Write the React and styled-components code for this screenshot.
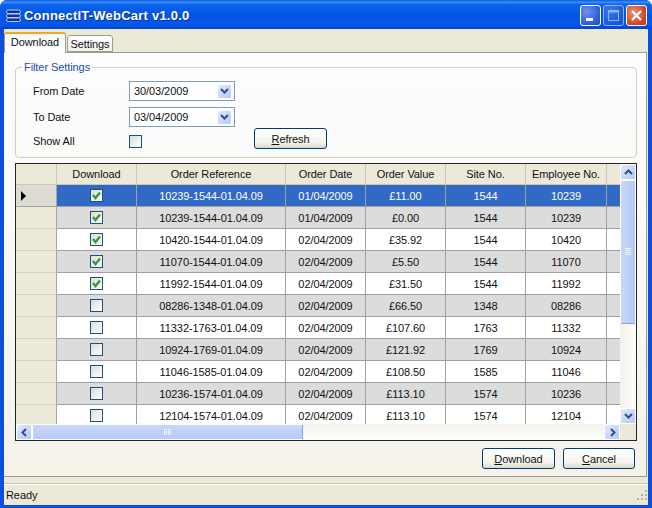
import React from 'react';
import styled, { createGlobalStyle } from 'styled-components';

const GlobalStyle = createGlobalStyle`
	html, body { margin: 0; padding: 0; }
	body { font-family: "Liberation Sans", Arial, sans-serif; font-size: 11px; letter-spacing: -0.08px; color: #111; }
	* { box-sizing: border-box; }
`;

const Window = styled.div`
	width: 652px;
	height: 508px;
	display: flex;
	flex-direction: column;
	background: #0a50dc;
	border-radius: 7px 7px 0 0;
	overflow: hidden;
`;
const TitleBar = styled.div`
	height: 29px;
	flex: none;
	display: flex;
	align-items: center;
	padding: 2px 5px 0 6px;
	background: linear-gradient(180deg, #0a56e0 0%, #3c8ef8 7%, #0a62ec 16%, #0355e3 55%, #0558ec 85%, #0346c8 100%);
`;
const TitleText = styled.div`
	flex: 1;
	margin-left: 3px;
	font-family: "Liberation Sans", sans-serif;
	font-weight: bold;
	font-size: 13px;
	letter-spacing: 0.22px;
	color: #fff;
	text-shadow: 1px 1px 0 #0a2f96;
`;
const CaptionButtons = styled.div`
	display: flex;
	gap: 2px;
`;
const CaptionButton = styled.div`
	width: 21px;
	height: 21px;
	border: 1px solid #fff;
	border-radius: 3px;
	display: flex;
	align-items: center;
	justify-content: center;
	background: ${(p) =>
		p.$close
			? 'radial-gradient(circle at 35% 35%, #e8967c, #d0492a 65%, #b5351a)'
			: 'radial-gradient(circle at 30% 30%, #6f92ec, #2f5fdc 65%, #2149c4)'};
	opacity: ${(p) => (p.$disabled ? 0.55 : 1)};
`;
const Body = styled.div`
	flex: 1;
	min-height: 0;
	margin: 0 4px;
	display: flex;
	flex-direction: column;
	background: #ece9d8;
`;
const TabStrip = styled.div`
	height: 23px;
	flex: none;
	display: flex;
	align-items: flex-end;
	position: relative;
	z-index: 1;
`;
const Tab = styled.div`
	height: ${(p) => (p.$active ? 21 : 17)}px;
	width: ${(p) => (p.$active ? 62 : 46)}px;
	margin-bottom: ${(p) => (p.$active ? -1 : 0)}px;
	margin-left: ${(p) => (p.$active ? 0 : 1)}px;
	display: flex;
	align-items: center;
	justify-content: center;
	padding-bottom: ${(p) => (p.$active ? 3 : 0)}px;
	background: ${(p) => (p.$active ? '#fcfcfe' : 'linear-gradient(180deg, #fff, #f3f1e8)')};
	border: 1px solid #9c9b91;
	border-bottom: ${(p) => (p.$active ? 'none' : '1px solid #9c9b91')};
	border-top: ${(p) => (p.$active ? '2px solid #f5a623' : '1px solid #9c9b91')};
	border-radius: 3px 3px 0 0;
`;
const TabPage = styled.div`
	height: 425px;
	flex: none;
	margin-right: 1px;
	padding: 8px 9px 0 11px;
	border: 1px solid #9c9b91;
	border-left: none;
	background: linear-gradient(180deg, #fdfdfe 0%, #f9f8f4 60%, #f4f2e9 100%);
	display: flex;
	flex-direction: column;
`;
const FilterGroup = styled.fieldset`
	margin: 0;
	height: 97px;
	flex: none;
	padding: 5px 0 0 17px;
	border: 1px solid #d0d0bf;
	border-radius: 4px;
	display: flex;
	flex-direction: column;
	position: relative;
`;
const Legend = styled.legend`
	margin-left: -11px;
	padding: 0 2px;
	color: #1a50a8;
	line-height: 12px;
`;
const FilterRow = styled.div`
	display: flex;
	align-items: center;
	height: ${(p) => p.$height}px;
`;
const FilterLabel = styled.div`
	width: 96px;
`;
const DateBox = styled.div`
	width: 106px;
	height: 20px;
	display: flex;
	align-items: center;
	justify-content: space-between;
	padding: 0 2px 0 4px;
	background: #fff;
	border: 1px solid #7f9db9;
`;
const ArrowButton = styled.div`
	width: ${(p) => (p.$wide ? 16 : 15)}px;
	height: ${(p) => (p.$wide ? 16 : 15)}px;
	flex: none;
	display: flex;
	align-items: center;
	justify-content: center;
	border: 1px solid #fff;
	border-radius: 2px;
	background: linear-gradient(135deg, #e1eafe, #b4c8f6);
`;
const RefreshSlot = styled.div`
	position: absolute;
	left: 238px;
	top: 55px;
`;
const Button = styled.button`
	width: ${(p) => p.$width}px;
	height: 21px;
	padding: 0;
	font: inherit;
	letter-spacing: inherit;
	color: #111;
	border: 1px solid #003c74;
	border-radius: 3px;
	background: linear-gradient(180deg, #fff 0%, #f5f4ee 70%, #dcd8ce 100%);
`;
const CheckBox = styled.div`
	width: 13px;
	height: 13px;
	flex: none;
	display: flex;
	align-items: center;
	justify-content: center;
	border: 1px solid #1c5180;
	background: linear-gradient(135deg, #dcdcd7, #fff);
`;
const GridFrame = styled.div`
	margin-top: 5px;
	height: 278px;
	flex: none;
	border: 1px solid #222;
	background: #f1efe2;
	display: flex;
	flex-direction: column;
`;
const GridMiddle = styled.div`
	flex: 1;
	min-height: 0;
	display: flex;
`;
const GridBody = styled.div`
	flex: 1;
	min-width: 0;
	overflow: hidden;
`;
const HeaderRow = styled.div`
	display: flex;
	height: 21px;
	background: #ece9d8;
	border-bottom: 1px solid #cbc7b8;
`;
const HeaderCell = styled.div`
	width: ${(p) => p.$width}px;
	flex: none;
	display: flex;
	align-items: center;
	justify-content: center;
	border-right: 1px solid #cbc7b8;
`;
const Row = styled.div`
	display: flex;
	height: 22px;
	background: ${(p) => (p.$alt ? '#dcdcdc' : '#fff')};
	color: ${(p) => (p.$selected ? '#fff' : 'inherit')};
`;
const RowHeader = styled.div`
	width: 41px;
	flex: none;
	display: flex;
	align-items: center;
	padding-left: 5px;
	background: ${(p) => (p.$current ? '#dcdcd4' : '#ece9d8')};
	border-right: 1px solid #a8a597;
	border-bottom: 1px solid ${(p) => (p.$current ? '#a8a597' : '#d6d2c2')};
`;
const Cell = styled.div`
	width: ${(p) => p.$width}px;
	flex: none;
	display: flex;
	align-items: center;
	justify-content: center;
	background: ${(p) => (p.$selected ? '#316ac5' : 'transparent')};
	border-right: 1px solid #a0a0a0;
	border-bottom: 1px solid #a0a0a0;
`;
const EmptyCell = styled.div`
	flex: 1;
	background: ${(p) => (p.$selected ? '#316ac5' : p.$alt ? '#dcdcdc' : '#fff')};
	border-bottom: 1px solid #a0a0a0;
`;
const VScroll = styled.div`
	width: 16px;
	flex: none;
	display: flex;
	flex-direction: column;
	background: linear-gradient(90deg, #f3f1ec, #fefefb);
`;
const VThumb = styled.div`
	height: 144px;
	flex: none;
	display: flex;
	align-items: center;
	justify-content: center;
	border: 1px solid #fff;
	border-bottom-color: #8aa2d6;
	border-radius: 2px;
	background: linear-gradient(90deg, #c8d7fa, #b6c9f7);
`;
const ScrollFill = styled.div`
	flex: 1;
`;
const HScroll = styled.div`
	height: 16px;
	flex: none;
	display: flex;
	background: linear-gradient(180deg, #f3f1ec, #fefefb);
`;
const HThumb = styled.div`
	width: 271px;
	flex: none;
	display: flex;
	align-items: center;
	justify-content: center;
	border: 1px solid #fff;
	border-right-color: #8aa2d6;
	border-radius: 2px;
	background: linear-gradient(180deg, #c8d7fa, #b6c9f7);
`;
const HCorner = styled.div`
	width: 16px;
	flex: none;
	background: #ece9d8;
`;
const ButtonRow = styled.div`
	margin-top: 7px;
	display: flex;
	justify-content: flex-end;
	gap: 8px;
	padding-right: 2px;
`;
const StatusBar = styled.div`
	height: 22px;
	flex: none;
	margin-top: 6px;
	display: flex;
	align-items: center;
	justify-content: space-between;
	padding: 0 0 0 2px;
	border-top: 1px solid #c5c2b2;
	box-shadow: inset 0 1px 0 #fff;
`;
const BottomEdge = styled.div`
	height: 3px;
	flex: none;
`;

const COLUMNS = [
	{ label: 'Order Reference', key: 'ref', width: 149 },
	{ label: 'Order Date', key: 'date', width: 80 },
	{ label: 'Order Value', key: 'value', width: 80 },
	{ label: 'Site No.', key: 'site', width: 80 },
	{ label: 'Employee No.', key: 'emp', width: 81 },
];

const order = (emp, site, date, value, checked) => ({
	ref: `${emp}-${site}-01.04.09`,
	date,
	value,
	site,
	emp,
	checked,
});

const ROWS = [
	order('10239', '1544', '01/04/2009', '£11.00', true),
	order('10239', '1544', '01/04/2009', '£0.00', true),
	order('10420', '1544', '02/04/2009', '£35.92', true),
	order('11070', '1544', '02/04/2009', '£5.50', true),
	order('11992', '1544', '02/04/2009', '£31.50', true),
	order('08286', '1348', '02/04/2009', '£66.50', false),
	order('11332', '1763', '02/04/2009', '£107.60', false),
	order('10924', '1769', '02/04/2009', '£121.92', false),
	order('11046', '1585', '02/04/2009', '£108.50', false),
	order('10236', '1574', '02/04/2009', '£113.10', false),
	order('12104', '1574', '02/04/2009', '£113.10', false),
];

const Chevron = ({ dir = 'down' }) => {
	const points = {
		down: '1,2 4.5,5.5 8,2',
		up: '1,6 4.5,2.5 8,6',
		left: '6,1 2.5,4.5 6,8',
		right: '3,1 6.5,4.5 3,8',
	}[dir];
	return (
		<svg width='9' height='9' viewBox='0 0 9 9'>
			<polyline points={points} fill='none' stroke='#2f4f8f' strokeWidth='2' />
		</svg>
	);
};

const Tick = () => (
	<svg width='11' height='11' viewBox='0 0 11 11'>
		<polyline points='2,5 4.5,8 9,2.5' fill='none' stroke='#3a9a38' strokeWidth='2.4' />
	</svg>
);

const Grip = ({ vertical }) => (
	<svg width='8' height='8' viewBox='0 0 8 8'>
		{[0, 2, 4, 6].map((n) =>
			vertical ? (
				<rect key={n} x='1' y={n} width='6' height='1' fill='#eef3ff' />
			) : (
				<rect key={n} x={n} y='1' width='1' height='6' fill='#eef3ff' />
			)
		)}
	</svg>
);

const AppIcon = () => (
	<svg width='15' height='14' viewBox='0 0 15 14'>
		{[1, 5, 9].map((y) => (
			<rect key={y} x='0.5' y={y} width='14' height='3.5' rx='1.7' fill='#12309a' stroke='#b9cdfa' strokeWidth='1' />
		))}
	</svg>
);

const SizeGrip = () => (
	<svg width='12' height='12' viewBox='0 0 12 12'>
		{[
			[9, 1],
			[5, 5],
			[9, 5],
			[1, 9],
			[5, 9],
			[9, 9],
		].map(([x, y]) => (
			<rect key={`${x}-${y}`} x={x} y={y} width='2' height='2' fill='#b5b2a2' />
		))}
	</svg>
);

const Check = ({ checked }) => <CheckBox>{checked && <Tick />}</CheckBox>;

const App = () => (
	<Window>
		<GlobalStyle />
		<TitleBar>
			<AppIcon />
			<TitleText>ConnectIT-WebCart v1.0.0</TitleText>
			<CaptionButtons>
				<CaptionButton>
					<svg width='13' height='13' viewBox='0 0 13 13'>
						<rect x='2' y='9' width='7' height='3' fill='#fff' />
					</svg>
				</CaptionButton>
				<CaptionButton $disabled>
					<svg width='13' height='13' viewBox='0 0 13 13'>
						<rect x='1.5' y='1.5' width='10' height='10' fill='none' stroke='#fff' />
						<rect x='1' y='1' width='11' height='2.5' fill='#fff' />
					</svg>
				</CaptionButton>
				<CaptionButton $close>
					<svg width='13' height='13' viewBox='0 0 13 13'>
						<path d='M2 2 L11 11 M11 2 L2 11' stroke='#fff' strokeWidth='2.2' />
					</svg>
				</CaptionButton>
			</CaptionButtons>
		</TitleBar>
		<Body>
			<TabStrip>
				<Tab $active>Download</Tab>
				<Tab>Settings</Tab>
			</TabStrip>
			<TabPage>
				<FilterGroup>
					<Legend>Filter Settings</Legend>
					<FilterRow $height={26}>
						<FilterLabel>From Date</FilterLabel>
						<DateBox>
							30/03/2009
							<ArrowButton>
								<Chevron />
							</ArrowButton>
						</DateBox>
					</FilterRow>
					<FilterRow $height={26}>
						<FilterLabel>To Date</FilterLabel>
						<DateBox>
							03/04/2009
							<ArrowButton>
								<Chevron />
							</ArrowButton>
						</DateBox>
					</FilterRow>
					<FilterRow $height={22}>
						<FilterLabel>Show All</FilterLabel>
						<Check />
					</FilterRow>
					<RefreshSlot>
						<Button $width={73}>
							<u>R</u>efresh
						</Button>
					</RefreshSlot>
				</FilterGroup>
				<GridFrame>
					<GridMiddle>
						<GridBody>
							<HeaderRow>
								<HeaderCell $width={41} />
								<HeaderCell $width={80}>Download</HeaderCell>
								{COLUMNS.map((col) => (
									<HeaderCell key={col.key} $width={col.width}>
										{col.label}
									</HeaderCell>
								))}
							</HeaderRow>
							{ROWS.map((row, i) => {
								const selected = i === 0;
								const alt = i % 2 === 1;
								return (
									<Row key={row.ref + row.value} $alt={alt} $selected={selected}>
										<RowHeader $current={selected}>
											{selected && (
												<svg width='6' height='10' viewBox='0 0 6 10'>
													<path d='M0 0 L5 5 L0 10 Z' fill='#000' />
												</svg>
											)}
										</RowHeader>
										<Cell $width={80} $selected={selected}>
											<Check checked={row.checked} />
										</Cell>
										{COLUMNS.map((col) => (
											<Cell key={col.key} $width={col.width} $selected={selected}>
												{row[col.key]}
											</Cell>
										))}
										<EmptyCell $alt={alt} $selected={selected} />
									</Row>
								);
							})}
						</GridBody>
						<VScroll>
							<ArrowButton $wide>
								<Chevron dir='up' />
							</ArrowButton>
							<VThumb>
								<Grip vertical />
							</VThumb>
							<ScrollFill />
							<ArrowButton $wide>
								<Chevron />
							</ArrowButton>
						</VScroll>
					</GridMiddle>
					<HScroll>
						<ArrowButton $wide>
							<Chevron dir='left' />
						</ArrowButton>
						<HThumb>
							<Grip />
						</HThumb>
						<ScrollFill />
						<ArrowButton $wide>
							<Chevron dir='right' />
						</ArrowButton>
						<HCorner />
					</HScroll>
				</GridFrame>
				<ButtonRow>
					<Button $width={73}>
						<u>D</u>ownload
					</Button>
					<Button $width={72}>
						<u>C</u>ancel
					</Button>
				</ButtonRow>
			</TabPage>
			<StatusBar>
				Ready
				<SizeGrip />
			</StatusBar>
		</Body>
		<BottomEdge />
	</Window>
);

export default App;
